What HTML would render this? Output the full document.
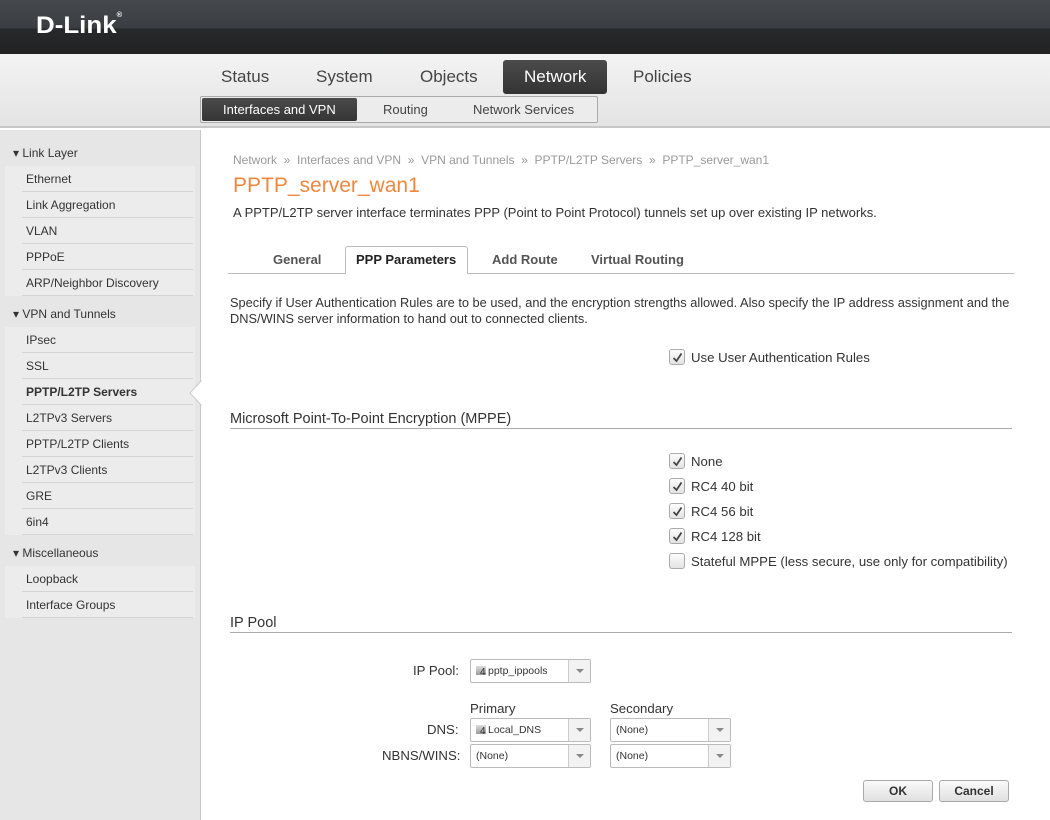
<!DOCTYPE html>
<html><head><meta charset="utf-8"><style>
*{margin:0;padding:0;box-sizing:border-box}
body{width:1050px;height:820px;overflow:hidden;font-family:"Liberation Sans",Arial,sans-serif;font-size:12px;color:#333;background:#fff;position:relative}
.a{position:absolute;white-space:nowrap}
#hdr{left:0;top:0;width:1050px;height:54px;background:linear-gradient(#45484d 0,#3a3d42 28px,#26292c 29px,#222 54px)}
#nav{left:0;top:54px;width:1050px;height:74px;background:linear-gradient(#f3f3f3,#e4e4e4);border-bottom:2px solid #c8c8c8}
.mt{font-size:17px;color:#444;top:67px}
#side{left:0;top:130px;width:201px;height:690px;background:#e6e6e6;border-right:1px solid #c9c9c9}
.sh{left:5px;width:190px;height:26px;line-height:26px;padding-left:8px;background:#e6e6e6;color:#333}
.si{left:5px;width:190px;height:26px;line-height:26px;padding-left:21px;background:#ececec;color:#333}
.si:after{content:"";position:absolute;left:17px;right:2px;bottom:0;border-bottom:1px solid #d4d4d4}
.cb{width:16px;height:16px;border:1px solid #aaa;border-radius:3px;background:linear-gradient(#fdfdfd,#e2e2e2)}
.cb svg{position:absolute;left:2px;top:2px}
.lbl{font-size:13.2px;color:#333}
.sel{height:24px;border:1px solid #bbb;border-radius:2px;background:#fff;font-size:10.5px;line-height:22px;padding-left:5px;color:#333}
.sel .dd{position:absolute;right:0;top:0;width:22px;height:22px;border-left:1px solid #ccc;background:#f2f2f2}
.sel .dd:after{content:"";position:absolute;left:7px;top:9px;border:4px solid transparent;border-top:4px solid #888}
.ico{display:inline-block;width:10px;height:9px;background:linear-gradient(#ddd,#999);margin-right:2px;vertical-align:-1px;position:relative}
.ico b{position:absolute;left:4px;top:2px;font-size:10px;font-weight:normal;color:#333;line-height:10px}
.sec{left:230px;width:782px;font-size:14.5px;color:#333;border-bottom:1px solid #aaa;padding-bottom:1px}
.btn{height:22px;border:1px solid #aaa;border-radius:3px;background:linear-gradient(#fafafa,#e0e0e0);font-weight:bold;text-align:center;line-height:20px;font-size:12px;color:#333}
</style></head><body>
<div id="hdr" class="a"></div>
<div class="a" style="left:36px;top:12px;font-family:'Liberation Sans',sans-serif;font-weight:bold;font-size:24px;color:#fff;letter-spacing:0px;transform:scaleX(1.08);transform-origin:left">D-Link<span style="font-size:7px;vertical-align:top">®</span></div>
<div id="nav" class="a"></div>
<div class="a mt" style="left:221px">Status</div>
<div class="a mt" style="left:316px">System</div>
<div class="a mt" style="left:420px">Objects</div>
<div class="a" style="left:503px;top:60px;width:104px;height:34px;background:linear-gradient(#4b4b4b,#333);border-radius:3px"></div>
<div class="a mt" style="left:524px;color:#fff">Network</div>
<div class="a mt" style="left:633px">Policies</div>
<div class="a" style="left:200px;top:96px;width:398px;height:27px;border:1px solid #aaa;border-radius:2px;background:#ececec"></div>
<div class="a" style="left:202px;top:98px;width:155px;height:23px;background:linear-gradient(#4a4a4a,#353535);border-radius:2px"></div>
<div class="a" style="left:223px;top:102px;font-size:13px;color:#fff">Interfaces and VPN</div>
<div class="a" style="left:383px;top:102px;font-size:13px;color:#444">Routing</div>
<div class="a" style="left:473px;top:102px;font-size:13px;color:#444">Network Services</div>

<div id="side" class="a"></div>
<div class="a sh" style="top:140px">▾ Link Layer</div>
<div class="a si" style="top:166px">Ethernet</div>
<div class="a si" style="top:192px">Link Aggregation</div>
<div class="a si" style="top:218px">VLAN</div>
<div class="a si" style="top:244px">PPPoE</div>
<div class="a si" style="top:270px">ARP/Neighbor Discovery</div>
<div class="a sh" style="top:301px">▾ VPN and Tunnels</div>
<div class="a si" style="top:327px">IPsec</div>
<div class="a si" style="top:353px">SSL</div>
<div class="a si" style="top:379px;font-weight:bold">PPTP/L2TP Servers</div>
<div class="a si" style="top:405px">L2TPv3 Servers</div>
<div class="a si" style="top:431px">PPTP/L2TP Clients</div>
<div class="a si" style="top:457px">L2TPv3 Clients</div>
<div class="a si" style="top:483px">GRE</div>
<div class="a si" style="top:509px">6in4</div>
<div class="a sh" style="top:540px">▾ Miscellaneous</div>
<div class="a si" style="top:566px">Loopback</div>
<div class="a si" style="top:592px">Interface Groups</div>
<svg class="a" style="left:189px;top:380px" width="14" height="26"><polygon points="13,0 1,13 13,26" fill="#fff" stroke="#c9c9c9"/><rect x="12.5" y="0" width="2" height="26" fill="#fff"/></svg>

<div class="a" style="left:233px;top:153px;color:#999">Network &nbsp;»&nbsp; Interfaces and VPN &nbsp;»&nbsp; VPN and Tunnels &nbsp;»&nbsp; PPTP/L2TP Servers &nbsp;»&nbsp; PPTP_server_wan1</div>
<div class="a" style="left:233px;top:174px;font-size:21px;color:#f0873e">PPTP_server_wan1</div>
<div class="a" style="left:233px;top:205px;font-size:13px">A PPTP/L2TP server interface terminates PPP (Point to Point Protocol) tunnels set up over existing IP networks.</div>

<div class="a" style="left:228px;top:273px;width:786px;border-top:1px solid #bbb"></div>
<div class="a" style="left:345px;top:246px;width:123px;height:28px;border:1px solid #bbb;border-bottom:none;border-radius:3px 3px 0 0;background:#fff"></div>
<div class="a" style="left:273px;top:252px;font-size:13px;font-weight:bold;color:#555">General</div>
<div class="a" style="left:356px;top:252px;font-size:13px;font-weight:bold;color:#222">PPP Parameters</div>
<div class="a" style="left:492px;top:252px;font-size:13px;font-weight:bold;color:#555">Add Route</div>
<div class="a" style="left:591px;top:252px;font-size:13px;font-weight:bold;color:#555">Virtual Routing</div>

<div class="a" style="left:230px;top:295px;font-size:12.8px;line-height:16px;width:786px;white-space:normal">Specify if User Authentication Rules are to be used, and the encryption strengths allowed. Also specify the IP address assignment and the DNS/WINS server information to hand out to connected clients.</div>

<div class="a cb" style="left:669px;top:349px"><svg width="11" height="11"><path d="M1.5 6 L4.5 9 L9.5 1.5" stroke="#444" stroke-width="1.8" fill="none"/></svg></div>
<div class="a lbl" style="left:691px;top:350px">Use User Authentication Rules</div>

<div class="a sec" style="top:411px">Microsoft Point-To-Point Encryption (MPPE)</div>
<div class="a cb" style="left:669px;top:453px"><svg width="11" height="11"><path d="M1.5 6 L4.5 9 L9.5 1.5" stroke="#444" stroke-width="1.8" fill="none"/></svg></div>
<div class="a lbl" style="left:691px;top:454px">None</div>
<div class="a cb" style="left:669px;top:478px"><svg width="11" height="11"><path d="M1.5 6 L4.5 9 L9.5 1.5" stroke="#444" stroke-width="1.8" fill="none"/></svg></div>
<div class="a lbl" style="left:691px;top:479px">RC4 40 bit</div>
<div class="a cb" style="left:669px;top:503px"><svg width="11" height="11"><path d="M1.5 6 L4.5 9 L9.5 1.5" stroke="#444" stroke-width="1.8" fill="none"/></svg></div>
<div class="a lbl" style="left:691px;top:504px">RC4 56 bit</div>
<div class="a cb" style="left:669px;top:528px"><svg width="11" height="11"><path d="M1.5 6 L4.5 9 L9.5 1.5" stroke="#444" stroke-width="1.8" fill="none"/></svg></div>
<div class="a lbl" style="left:691px;top:529px">RC4 128 bit</div>
<div class="a cb" style="left:669px;top:553px"></div>
<div class="a lbl" style="left:691px;top:554px">Stateful MPPE (less secure, use only for compatibility)</div>

<div class="a sec" style="top:615px">IP Pool</div>
<div class="a lbl" style="left:413px;top:663px">IP Pool:</div>
<div class="a sel" style="left:470px;top:659px;width:121px"><span class="ico"><b>4</b></span>pptp_ippools<div class="dd"></div></div>
<div class="a lbl" style="left:470px;top:701px">Primary</div>
<div class="a lbl" style="left:610px;top:701px">Secondary</div>
<div class="a lbl" style="left:427px;top:722px">DNS:</div>
<div class="a sel" style="left:470px;top:718px;width:121px"><span class="ico"><b>4</b></span>Local_DNS<div class="dd"></div></div>
<div class="a sel" style="left:610px;top:718px;width:121px">(None)<div class="dd"></div></div>
<div class="a lbl" style="left:382px;top:748px">NBNS/WINS:</div>
<div class="a sel" style="left:470px;top:744px;width:121px">(None)<div class="dd"></div></div>
<div class="a sel" style="left:610px;top:744px;width:121px">(None)<div class="dd"></div></div>

<div class="a btn" style="left:863px;top:780px;width:70px">OK</div>
<div class="a btn" style="left:939px;top:780px;width:70px">Cancel</div>
</body></html>
